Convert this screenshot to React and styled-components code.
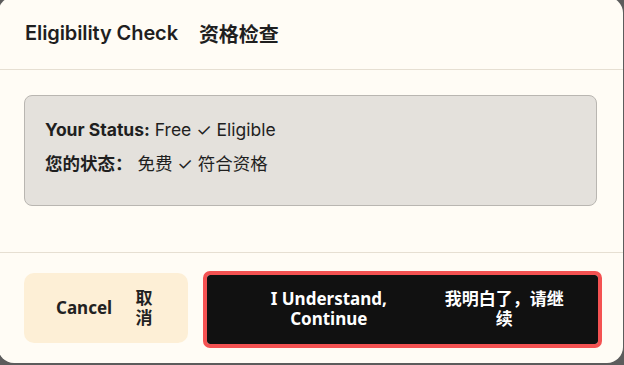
import React from "react";
import styled, { createGlobalStyle } from "styled-components";

const GlobalStyle = createGlobalStyle`
  html, body {
    margin: 0;
    padding: 0;
    width: 624px;
    height: 365px;
    overflow: hidden;
    background: #5c5c5c;
  }
  * {
    box-sizing: border-box;
  }
`;

const Backdrop = styled.div`
  position: fixed;
  inset: 0;
  background: #5c5c5c;
`;

const Dialog = styled.div`
  position: fixed;
  left: -2px;
  top: -3px;
  width: 625px;
  height: 366px;
  border-radius: 16px;
  background: #fffcf5;
  display: flex;
  flex-direction: column;
  font-family: Inter, "Noto Sans CJK SC", sans-serif;
  color: #1f1f1f;
`;

const Header = styled.div`
  height: 73px;
  display: flex;
  align-items: center;
  gap: 21px;
  padding: 0 27px;
  border-bottom: 1px solid #e6dfd2;
`;

const Title = styled.h2`
  margin: 0;
  font-size: 20px;
  font-weight: 600;
  letter-spacing: -0.1px;
`;

const Body = styled.div`
  flex: 1;
  padding: 25px 26px;
`;

const StatusBox = styled.div`
  background: #e4e1dc;
  border: 1px solid #b9b6b1;
  border-radius: 8px;
  padding: 20px 20px 27px;
  display: flex;
  flex-direction: column;
  gap: 6px;
  font-size: 17.5px;
`;

const Line = styled.div`
  line-height: 28px;
`;

const Strong = styled.b`
  font-weight: 700;
`;

const Footer = styled.div`
  height: 111px;
  border-top: 1px solid #e6dfd2;
  display: flex;
  align-items: center;
  gap: 19px;
  padding: 0 25px 0 26px;
`;

const Button = styled.button`
  height: 70px;
  border: none;
  display: flex;
  align-items: center;
  justify-content: center;
  gap: ${(p) => p.$gap}px;
  padding: 0 32px;
  font-family: "Noto Sans", "Noto Sans CJK SC", sans-serif;
  font-size: 17px;
  font-weight: 700;
  line-height: 20px;
  text-align: center;
  cursor: pointer;
`;

const CancelButton = styled(Button)`
  width: 164px;
  flex: none;
  background: #fdefd6;
  color: #222;
  border-radius: 10px;
`;

const PrimaryButton = styled(Button)`
  flex: 1;
  height: 69px;
  margin-top: 2px;
  background: #111111;
  color: #fff;
  border-radius: 3px;
  outline: 4px solid #f45252;
  outline-offset: 0;
`;

const Label = styled.span`
  flex: 0 1 auto;
`;

export default function App() {
  return (
    <>
      <GlobalStyle />
      <Backdrop />
      <Dialog role="dialog">
        <Header>
          <Title>Eligibility Check</Title>
          <Title>资格检查</Title>
        </Header>
        <Body>
          <StatusBox>
            <Line>
              <Strong>Your Status:</Strong> Free ✓ Eligible
            </Line>
            <Line>
              <Strong>您的状态：</Strong> 免费 ✓ 符合资格
            </Line>
          </StatusBox>
        </Body>
        <Footer>
          <CancelButton $gap={20}>
            <Label>Cancel</Label>
            <Label>取消</Label>
          </CancelButton>
          <PrimaryButton $gap={24}>
            <Label>I Understand, Continue</Label>
            <Label>我明白了，请继续</Label>
          </PrimaryButton>
        </Footer>
      </Dialog>
    </>
  );
}
